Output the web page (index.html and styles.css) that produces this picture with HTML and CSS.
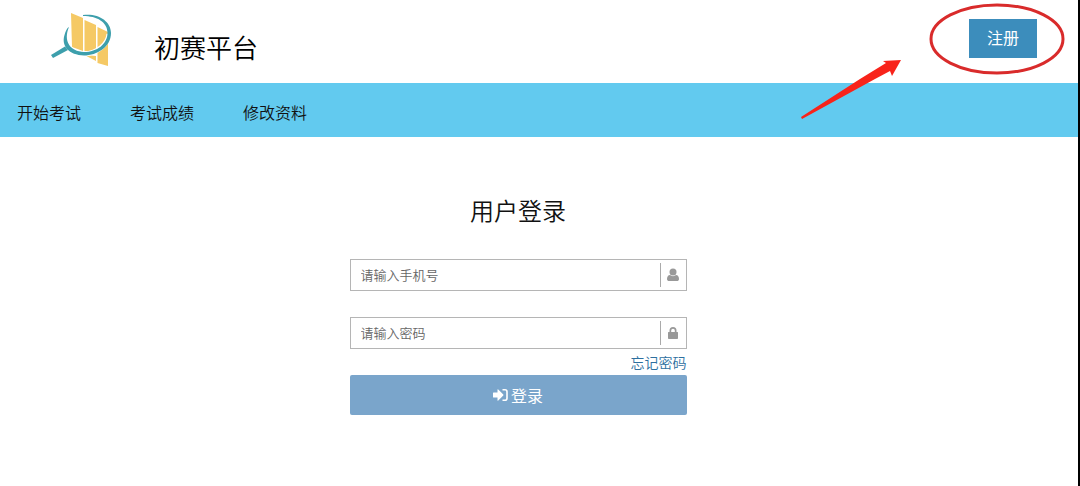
FILE: index.html
```html
<!DOCTYPE html>
<html lang="zh-CN">
<head>
    <meta charset="UTF-8">
    <meta name="viewport" content="width=device-width, initial-scale=1.0">
    <title>初赛平台</title>
    <link rel="stylesheet" href="styles.css">
</head>
<body>

    <header class="header">
        <svg class="logo" viewBox="0 0 64 56" aria-hidden="true">
            <g fill="#f5c965">
                <path d="M21 1L33 6V39L22 35Z" />
                <path d="M34.500 8L46 13V40L34.500 39Z" />
                <path d="M47.500 15L58 20V54L47.500 51Z" />
                <path d="M34.500 43L46 44V49Z" />
            </g>
            <path d="M17 17C12 29 20 42 34 42C48 41 58 32 59 22" fill="none" stroke="#fff" stroke-width="5" />
            <path d="M33 3C48 1 61 9 61 21C61 35 47 43.500 34 43.500C19 43 11 34 14.500 23C15.500 19 17 16 19 15C13 29 20 39.500 34 40C47 40 57.500 32 57.500 21C57.500 10 47 4 33 4Z" fill="#3d9fac" />
            <path d="M15 34.500L18 38L3 46L1 43Z" fill="#3d9fac" />
        </svg>
        <h1 class="site-name">初赛平台</h1>
        <button class="register-button" type="button">注册</button>

        <!-- Pointer to the register button -->
        <svg class="hint" viewBox="0 0 298 145" aria-hidden="true">
            <ellipse cx="217" cy="39" rx="66" ry="34" fill="none" stroke="#d92b2b" stroke-width="3" />
            <path d="M21 117L80 79L106 63L103 61L121 60L112 76L110 71L95 79L22 119Z" fill="#f8231a" />
        </svg>
    </header>

    <nav class="nav">
        <a href="#">开始考试</a>
        <a href="#">考试成绩</a>
        <a href="#">修改资料</a>
    </nav>

    <main class="main">
        <form class="login-form">
            <h2 class="form-title">用户登录</h2>

            <div class="field">
                <input type="text" id="phone" placeholder="请输入手机号" aria-label="手机号">
                <label for="phone">
                    <svg class="field-icon" viewBox="0 0 12 14" aria-label="手机号">
                        <circle cx="6" cy="4" r="3.500" />
                        <path d="M3 7C1 7 0 9 0 11C0 12.500 1 13 2 13H10C11 13 12 12.500 12 11C12 9 11 7 9 7C7.500 8.500 4.500 8.500 3 7Z" />
                    </svg>
                </label>
            </div>

            <div class="field">
                <input type="password" id="password" placeholder="请输入密码" aria-label="密码">
                <label for="password">
                    <svg class="field-icon" viewBox="0 0 12 14" aria-label="密码">
                        <path d="M1.500 6H2.500V4.500A3.500 3.500 0 0 1 9.500 4.500V6H10.500Q11 6 11 6.800V12.200Q11 13 10.200 13H1.800Q1 13 1 12.200V6.800Q1 6 1.500 6ZM4.200 6H7.800V4.500A1.800 1.800 0 0 0 4.200 4.500Z" />
                    </svg>
                </label>
            </div>

            <a class="forgot-link" href="#">忘记密码</a>

            <button class="login-button" type="submit">
                <svg class="login-icon" viewBox="0 0 15 14" aria-hidden="true">
                    <path d="M0 5Q0 4.500 .5 4.500H4.500V1.800Q4.500 .8 5.300 1.500L10.300 6.500Q10.700 7 10.300 7.500L5.300 12.500Q4.500 13.200 4.500 12.200V9.500H.5Q0 9.500 0 9Z" />
                    <path d="M9.500 1.800H12Q14 1.800 14 3.800V10.200Q14 12.200 12 12.200H9.500" fill="none" stroke="#fff" stroke-width="1.600" />
                </svg>
                登录
            </button>
        </form>
    </main>

</body>
</html>
```
FILE: styles.css
```css
* {
    box-sizing: border-box;
}

body {
    margin: 0;
    min-height: 100vh;
    font-family: "Noto Sans CJK SC", sans-serif;
    font-weight: 350;
    color: #111;
    background: #fff;
    border-right: 2px solid #000;
}

a {
    text-decoration: none;
}

.header {
    position: relative;
    display: flex;
    align-items: flex-start;
    padding: 12px 41px 0 50px;
    height: 83px;
}

.logo {
    width: 64px;
    height: 56px;
}

.site-name {
    margin: 15px 0 0 40px;
    font-size: 26px;
    line-height: 40px;
    font-weight: 350;
    color: #000;
}

.register-button {
    margin: 7px 0 0 auto;
    padding: 0 18px 4px;
    height: 39px;
    border: none;
    background: #3c8dbc;
    color: #fff;
    font-family: inherit;
    font-size: 16px;
    font-weight: 400;
    cursor: pointer;
}

.hint {
    position: absolute;
    top: 0;
    right: 0;
    width: 298px;
    height: 145px;
    pointer-events: none;
}

.nav {
    display: flex;
    gap: 49px;
    padding: 17px 17px 13px;
    background: #62caef;
}

.nav a {
    font-size: 16px;
    line-height: 24px;
    color: #111;
}

.main {
    display: flex;
    justify-content: center;
    padding: 53px 42px 40px 0;
}

.login-form {
    display: flex;
    flex-direction: column;
    width: 100%;
    max-width: 337px;
}

.form-title {
    margin: 0 0 29px;
    font-size: 24px;
    line-height: 40px;
    font-weight: 350;
    text-align: center;
}

.field {
    display: flex;
    align-items: center;
    height: 32px;
    margin-bottom: 26px;
    border: 1px solid #b5b5b5;
}

.field input {
    flex: 1;
    min-width: 0;
    padding: 0 10px 2px;
    border: none;
    outline: none;
    background: none;
    font-family: inherit;
    font-size: 13px;
    font-weight: 350;
}

.field input::placeholder {
    color: #666;
}

.field label {
    display: flex;
    align-items: center;
    justify-content: center;
    width: 26px;
    height: 24px;
    border-left: 1px solid #aaa;
}

.field-icon {
    width: 12px;
    height: 14px;
    fill: #999;
}

.field + .forgot-link {
    margin-top: -23px;
}

.forgot-link {
    align-self: flex-end;
    margin-bottom: 3px;
    font-size: 14px;
    line-height: 20px;
    color: #2d6f9f;
}

.login-button {
    display: flex;
    align-items: center;
    justify-content: center;
    gap: 3px;
    height: 40px;
    border: none;
    border-radius: 2px;
    background: #7aa5cb;
    color: #fff;
    font-family: inherit;
    font-size: 16px;
    font-weight: 400;
    cursor: pointer;
}

.login-icon {
    width: 15px;
    height: 14px;
    fill: #fff;
}
```
